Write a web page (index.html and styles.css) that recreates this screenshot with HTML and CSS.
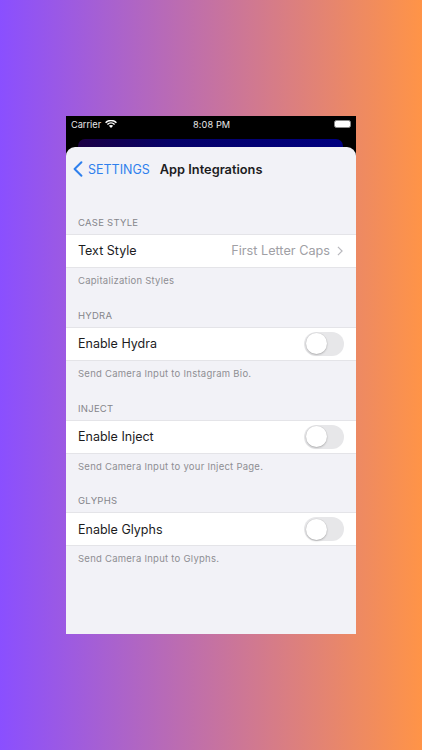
FILE: index.html
```html
<!DOCTYPE html>
<html lang="en">
<head>
<meta charset="utf-8">
<title>App Integrations</title>
<link rel="stylesheet" href="styles.css">
</head>
<body>
<main class="phone">
  <div class="status">
    <div class="status-left">
      <span>Carrier</span>
      <svg class="wifi" viewBox="0 0 12 8" width="12" height="8"><path d="M.6 2.7C3.6-.3 8.4-.3 11.4 2.7M2.4 4.5c2-1.9 5.2-1.9 7.2 0" fill="none" stroke="#fff" stroke-width="1.5"/><path d="M3.9 5.8c1.2-1 3-1 4.2 0L6 8z" fill="#fff"/></svg>
    </div>
    <span class="time">8:08 PM</span>
    <div class="battery"></div>
  </div>
  <div class="behind"></div>
  <div class="sheet">
    <header class="nav">
      <svg class="back" viewBox="0 0 10 16" width="10" height="16"><path d="M8.4 1.2 1.6 8l6.8 6.8" fill="none" stroke="#2f80ed" stroke-width="2" stroke-linecap="round" stroke-linejoin="round"/></svg>
      <span class="back-label">SETTINGS</span>
      <h1 class="title">App Integrations</h1>
    </header>
    <section class="group first">
      <h2 class="group-head">CASE STYLE</h2>
      <div class="row">
        <span>Text Style</span>
        <div class="value">
          <span>First Letter Caps</span>
          <svg viewBox="0 0 7 12" width="6" height="10"><path d="M1 1l5 5-5 5" fill="none" stroke="#b8b8bd" stroke-width="1.4"/></svg>
        </div>
      </div>
      <p class="group-foot">Capitalization Styles</p>
    </section>
    <section class="group">
      <h2 class="group-head">HYDRA</h2>
      <div class="row"><span>Enable Hydra</span><span class="toggle"><span class="knob"></span></span></div>
      <p class="group-foot">Send Camera Input to Instagram Bio.</p>
    </section>
    <section class="group">
      <h2 class="group-head">INJECT</h2>
      <div class="row"><span>Enable Inject</span><span class="toggle"><span class="knob"></span></span></div>
      <p class="group-foot">Send Camera Input to your Inject Page.</p>
    </section>
    <section class="group">
      <h2 class="group-head">GLYPHS</h2>
      <div class="row"><span>Enable Glyphs</span><span class="toggle"><span class="knob"></span></span></div>
      <p class="group-foot">Send Camera Input to Glyphs.</p>
    </section>
  </div>
</main>
</body>
</html>
```
FILE: styles.css
```css
* { box-sizing: border-box; }
html, body { height: 100%; margin: 0; }
body {
  background: linear-gradient(90deg, #8a4fff 0%, #ff9447 100%);
  display: flex;
  justify-content: center;
  padding: 116px 0 0 0;
  font-family: Inter, "Liberation Sans", sans-serif;
  overflow: hidden;
}
.phone {
  width: 290px;
  height: 518px;
  background: #000;
  position: relative;
  display: flex;
  flex-direction: column;
}
.status {
  height: 31px;
  display: flex;
  align-items: flex-start;
  justify-content: space-between;
  padding: 3px 5px 0 5px;
  color: #e8e8e8;
  font-size: 9.2px;
  line-height: 11px;
  position: relative;
}
.status-left { display: flex; align-items: center; gap: 4px; }
.wifi { margin-top: -1px; }
.time { position: absolute; left: 127px; top: 3px; letter-spacing: .1px; }
.battery {
  width: 17px;
  height: 8px;
  margin-top: 1px;
  border: 1px solid #8a8a8a;
  border-radius: 2.5px;
  background: #fff;
}
.behind {
  position: absolute;
  top: 23px;
  left: 12px;
  right: 13px;
  height: 20px;
  background: linear-gradient(90deg, #1c0044 0%, #06026a 35%, #000080 100%);
  border-radius: 7px 7px 0 0;
}
.sheet {
  position: relative;
  flex: 1;
  background: #f2f2f7;
  border-radius: 9px 9px 0 0;
}
.nav {
  height: 44px;
  display: flex;
  align-items: center;
  padding-left: 7px;
}
.back { margin-right: 5px; }
.back-label { color: #2f80ed; font-size: 12.5px; margin-right: 10px; }
.title { margin: 0; font-size: 12.8px; font-weight: 600; color: #1c1c1e; }
.group { height: 92.9px; }
.group.first { margin-top: 22.8px; }
.group-head {
  margin: 0;
  height: 20px;
  padding: 0 0 0 12px;
  font-size: 9.5px;
  font-weight: 400;
  letter-spacing: .25px;
  line-height: 17.5px;
  color: #85858b;
}
.group-foot {
  margin: 0;
  padding: 7px 0 0 12px;
  font-size: 9.5px;
  letter-spacing: .25px;
  line-height: 12px;
  color: #8e8e93;
}
.row {
  height: 34px;
  background: #fff;
  border-top: 1px solid #e4e4e8;
  border-bottom: 1px solid #e4e4e8;
  display: flex;
  align-items: center;
  justify-content: space-between;
  padding: 0 12px;
  font-size: 12.5px;
  color: #1c1c1e;
}
.value { display: flex; align-items: center; gap: 7px; color: #a0a0a5; font-size: 12.7px; padding-right: 1px; }
.toggle {
  width: 40px;
  height: 24px;
  border-radius: 12px;
  background: #e7e7e9;
  padding: 1.5px;
  display: block;
}
.knob {
  display: block;
  width: 21px;
  height: 21px;
  border-radius: 50%;
  background: #fff;
  box-shadow: 0 1px 2px rgba(0,0,0,.22), 0 0 0 .5px rgba(0,0,0,.06);
}
```
